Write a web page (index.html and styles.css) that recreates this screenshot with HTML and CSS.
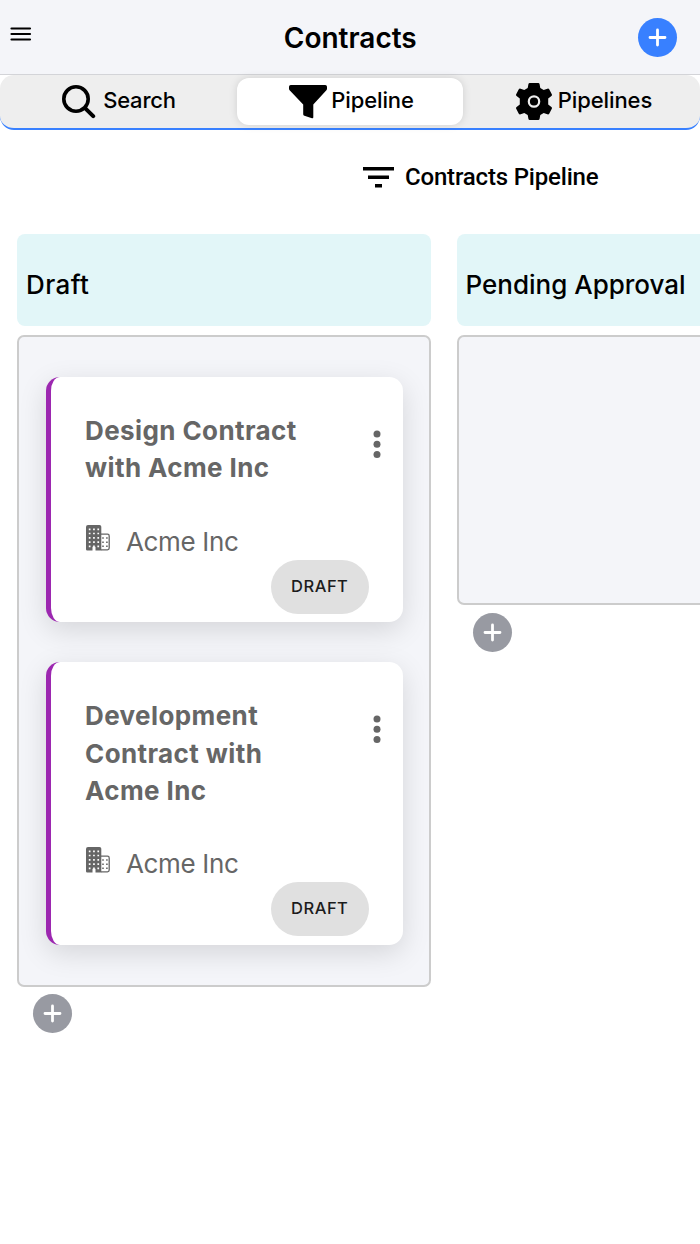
FILE: index.html
```html
<!DOCTYPE html>
<html lang="en">
<head>
  <meta charset="UTF-8">
  <meta name="viewport" content="width=device-width, initial-scale=1.0">
  <title>Contracts</title>
  <link rel="stylesheet" href="styles.css">
</head>
<body>

  <!-- Shared icons -->
  <svg class="sprite" width="0" height="0">
    <symbol id="plus" viewBox="0 0 39 39">
      <path d="M19.500 12v15M12 19.500h15" fill="none" stroke="#fff" stroke-width="2.800" stroke-linecap="round"/>
    </symbol>
    <symbol id="more" viewBox="0 0 8 28">
      <circle cx="4" cy="4" r="3.500"/>
      <circle cx="4" cy="14.200" r="3.500"/>
      <circle cx="4" cy="24.400" r="3.500"/>
    </symbol>
    <symbol id="building" viewBox="0 0 24 26">
      <path d="M2 0h11.500q1.800 0 1.800 1.800V25.500H9.500v-3.700H6.500v3.700H1.200Q0 25.500 0 24.300V2Q0 0 2 0z"/>
      <path d="M15 9.200h6.500q1.700 0 1.700 1.700v12.200q0 1.700-1.700 1.700H15" fill="none" stroke="currentColor" stroke-width="1.300"/>
      <path d="M2.800 4.300h11M2.800 8.500h11M2.800 12.800h11M2.800 17.100h11M2.800 21.400h11" fill="none" stroke="#fff" stroke-width="1.700" stroke-dasharray="1.700 2.600"/>
      <path d="M16.200 13h5.500M16.200 17.200h5.500M16.200 21.300h5.500" fill="none" stroke="currentColor" stroke-width="1.500" stroke-dasharray="1.600 2.300"/>
    </symbol>
  </svg>

  <header class="header">
    <button class="menu-btn" aria-label="Menu">
      <svg width="22" height="16" viewBox="0 0 22 16">
        <path d="M1.500 2.500h18.500M1.500 8h18.500M1.500 13.500h18.500" fill="none" stroke="#000" stroke-width="2.200" stroke-linecap="round"/>
      </svg>
    </button>
    <h1>Contracts</h1>
    <button class="round-btn primary" aria-label="Add contract"><svg><use href="#plus"/></svg></button>
  </header>

  <nav class="tabs">
    <a class="tab">
      <svg width="34" height="34" viewBox="0 0 34 34" fill="none" stroke="#000" stroke-linecap="round">
        <circle cx="14" cy="14" r="12.200" stroke-width="3.600"/>
        <path d="M23.300 23.300l7.900 7.900" stroke-width="4"/>
      </svg>
      <span>Search</span>
    </a>
    <a class="tab active">
      <svg width="38" height="34" viewBox="0 0 38 34">
        <path d="M1.800 0h34.400q1.800 0 1.800 1.800v2q0 .8-.6 1.500L24.300 19.400v12.800q0 1.400-1.300 1l-7.600-2.500q-1.200-.4-1.200-1.500v-9.800L.6 5.300Q0 4.600 0 3.800v-2Q0 0 1.800 0z"/>
      </svg>
      <span>Pipeline</span>
    </a>
    <a class="tab">
      <svg width="36" height="37" viewBox="0 0 36 37">
        <path d="M13.800 0h8.400q1.200 0 1.400 1.200l.7 3.900 3.400 2 3.700-1.400q1.200-.4 1.800.6l2.600 5q.5 1-.4 1.700l-3.200 2.600v5.800l3.200 2.600q.9.700.4 1.700l-2.600 5q-.6 1-1.800.6l-3.700-1.400-3.400 2-.7 3.900q-.2 1.200-1.400 1.200h-8.400q-1.200 0-1.400-1.200l-.7-3.900-3.400-2-3.700 1.400q-1.200.4-1.800-.6l-2.600-5q-.5-1 .4-1.700l3.200-2.600v-5.800L.6 13Q-.3 12.300.2 11.300l2.600-5q.6-1 1.800-.6l3.700 1.400 3.400-2 .7-3.900Q12.600 0 13.800 0z"/>
        <circle cx="18" cy="18.500" r="5.200" fill="none" stroke="#eee" stroke-width="2.200"/>
      </svg>
      <span>Pipelines</span>
    </a>
  </nav>

  <div class="pipeline-select">
    <svg width="31" height="21" viewBox="0 0 31 21">
      <path d="M0 0h31v3.500H0zM5 8.500h21V12H5zM12 17h7v3.500h-7z"/>
    </svg>
    <span>Contracts Pipeline</span>
  </div>

  <main class="board">
    <section class="column">
      <h2 class="column-title draft">Draft</h2>
      <div class="column-body">
        <article class="card">
          <div class="card-head">
            <h3>Design Contract with Acme Inc</h3>
            <svg class="more" width="8" height="28"><use href="#more"/></svg>
          </div>
          <div class="company">
            <svg width="24" height="26"><use href="#building"/></svg>
            <span>Acme Inc</span>
          </div>
          <span class="status">DRAFT</span>
        </article>

        <article class="card">
          <div class="card-head">
            <h3>Development Contract with Acme Inc</h3>
            <svg class="more" width="8" height="28"><use href="#more"/></svg>
          </div>
          <div class="company">
            <svg width="24" height="26"><use href="#building"/></svg>
            <span>Acme Inc</span>
          </div>
          <span class="status">DRAFT</span>
        </article>
      </div>
      <button class="round-btn" aria-label="Add to Draft"><svg><use href="#plus"/></svg></button>
    </section>

    <section class="column">
      <h2 class="column-title">Pending Approval</h2>
      <div class="column-body"></div>
      <button class="round-btn" aria-label="Add to Pending Approval"><svg><use href="#plus"/></svg></button>
    </section>
  </main>

</body>
</html>
```
FILE: styles.css
```css
* {
  box-sizing: border-box;
}

body {
  margin: 0;
  min-height: 100vh;
  background: #fff;
  color: #000;
  font-family: Inter, "Liberation Sans", sans-serif;
}

h1,
h2,
h3 {
  margin: 0;
}

svg {
  display: block;
  flex-shrink: 0;
}

.sprite {
  position: absolute;
}

button {
  border: none;
  padding: 0;
  background: none;
}

.header {
  display: grid;
  grid-template-columns: 60px 1fr 60px;
  align-items: center;
  height: 75px;
  padding: 0 23px 0 9.5px;
  background: #f4f5f9;
  border-bottom: 1px solid #d3d4d8;
}

.header h1 {
  padding: 1px 0 0 14px;
  text-align: center;
  font-size: 28px;
  font-weight: 600;
  line-height: 36px;
}

.menu-btn {
  margin-bottom: 7px;
}

.round-btn {
  display: block;
  width: 39px;
  height: 39px;
  border-radius: 50%;
  background: #989aa2;
}

.round-btn svg {
  width: 39px;
  height: 39px;
}

.round-btn.primary {
  justify-self: end;
  background: #3880ff;
}

/* Tabs */
.tabs {
  display: grid;
  grid-template-columns: 1fr 226px 1fr;
  height: 55px;
  padding: 3px 0;
  background: #eee;
  border-bottom: 2px solid #3880ff;
  border-radius: 14px;
}

.tab {
  display: flex;
  align-items: center;
  justify-content: center;
  gap: 7px;
  height: 47px;
  padding-left: 1px;
  font-size: 22px;
  font-weight: 500;
  letter-spacing: -0.2px;
}

.tab span {
  margin-bottom: 3px;
}

.tab:last-child {
  gap: 6px;
  padding-left: 5px;
  letter-spacing: -0.1px;
}

.tab.active {
  gap: 4px;
  padding-left: 3px;
  background: #fff;
  border-radius: 12px;
  box-shadow: 0 0 8px rgba(0, 0, 0, 0.13);
  letter-spacing: -0.1px;
}

.pipeline-select {
  display: flex;
  align-items: center;
  gap: 11px;
  height: 104px;
  padding: 0 0 9px 363px;
  font-family: Roboto, sans-serif;
  font-size: 24px;
  font-weight: 500;
  letter-spacing: -0.18px;
}

.pipeline-select span {
  margin-bottom: 2px;
}

/* Board */
.board {
  display: flex;
  align-items: flex-start;
  gap: 25.5px;
  padding-left: 17px;
  overflow: hidden;
}

.column {
  flex: 0 0 414px;
}

.column-title {
  height: 92px;
  margin-bottom: 9px;
  padding: 33px 9px 0;
  border-radius: 8px;
  background: #e2f6f8;
  font-size: 26px;
  font-weight: 500;
  line-height: 36px;
}

.column-title.draft {
  letter-spacing: 0.4px;
}

.column-body {
  display: flex;
  flex-direction: column;
  gap: 40px;
  min-height: 270px;
  margin-bottom: 7.5px;
  padding: 40px 26.500px 40px 27px;
  background: #f4f5f9;
  border: 2px solid #ccc;
  border-radius: 7px;
}

.column .round-btn {
  margin-left: 16px;
}

.card {
  display: flex;
  flex-direction: column;
  padding: 35px 34px 8.7px;
  background: #fff;
  border-left: 5px solid #9c27b0;
  border-radius: 14px;
  box-shadow: 0 8px 28px rgba(0, 0, 0, 0.13);
  color: #666;
}

.card-head {
  display: flex;
  justify-content: space-between;
  margin-right: -12px;
}

.card-head h3 {
  width: 225px;
  font-size: 26px;
  font-weight: 700;
  letter-spacing: 0.4px;
  line-height: 37.2px;
}

.more {
  margin-top: 18px;
  fill: #666;
}

.company {
  display: flex;
  gap: 16px;
  height: 37px;
  margin-top: 36.3px;
  padding-left: 1px;
  font-size: 26px;
  letter-spacing: -0.35px;
  line-height: 37px;
}

.company svg {
  margin-top: 2px;
  fill: #666;
}

.status {
  align-self: flex-end;
  width: 97.5px;
  height: 54px;
  border-radius: 27px;
  background: #e0e0e0;
  color: #1c1c1c;
  text-align: center;
  font-size: 16.5px;
  font-weight: 500;
  letter-spacing: 0.5px;
  line-height: 53px;
}
```
